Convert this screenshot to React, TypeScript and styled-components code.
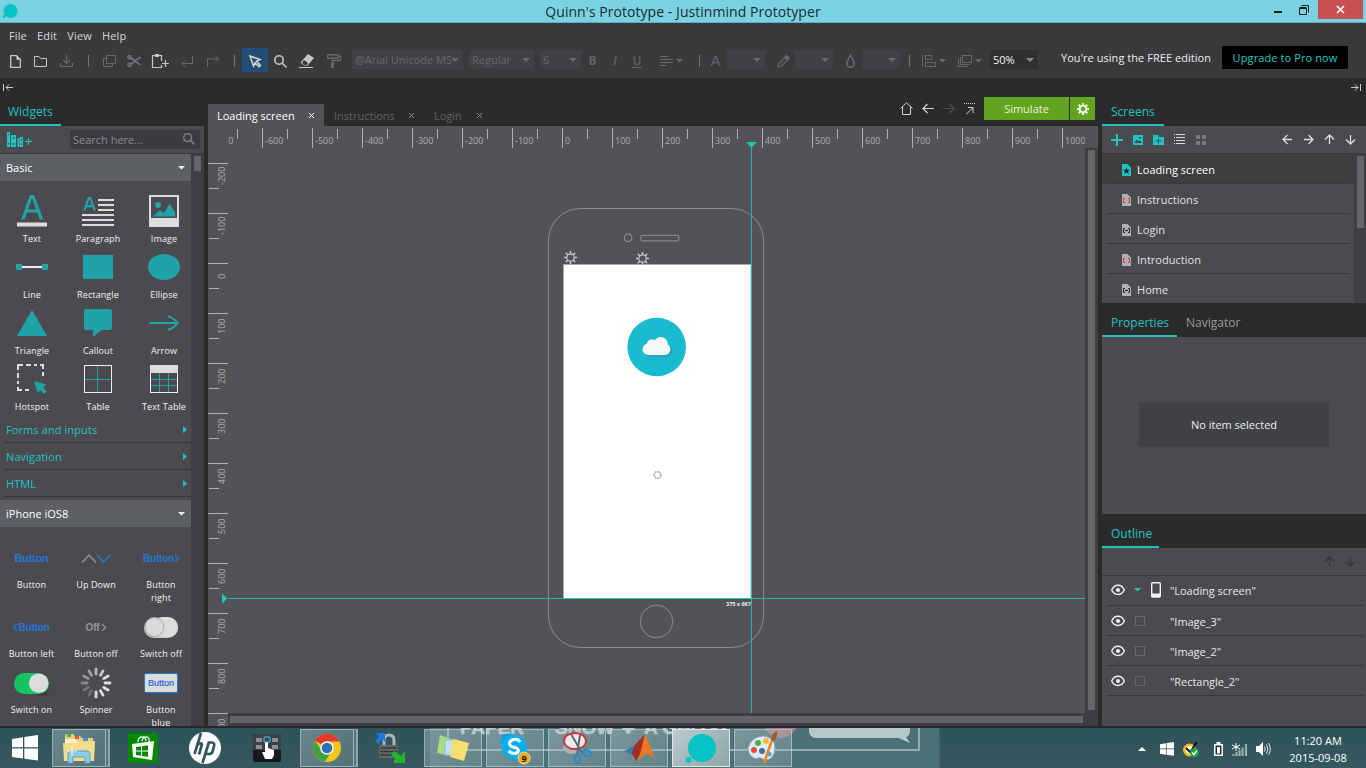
import React from "react";
import styled, { createGlobalStyle, css } from "styled-components";

const teal = "#1fc3c4";
const steel = "#1fa3a8";
const dark = "#2b2b2b";
const panel = "#4a4a4f";
const line = "#38383b";
const pale = "#dcdcdc";
const dim = "#66686c";

const Global = createGlobalStyle`
  * { box-sizing: border-box; }
  html, body { margin: 0; padding: 0; overflow: hidden; }
  body { font-family: "Open Sans", "Noto Sans", sans-serif; font-size: 11px; color: #e6e6e6; background: ${dark}; }
`;

const Desktop = styled.div`
  width: 1366px; height: 768px; display: flex; flex-direction: column; overflow: hidden; background: ${dark};
`;

const Svg = styled.svg`display: block; flex: none; overflow: visible;`;
type IconProps = { w: number; h: number; children: React.ReactNode; crisp?: boolean; stroke?: string; fill?: string; sw?: number };
const Icon = ({ w, h, children, crisp, stroke = "none", fill = "none", sw = 1 }: IconProps) => (
  <Svg width={w} height={h} viewBox={`0 0 ${w} ${h}`} stroke={stroke} fill={fill} strokeWidth={sw}
    shapeRendering={crisp ? "crispEdges" : "auto"}>{children}</Svg>
);

/* ---------- title bar ---------- */
const TitleBar = styled.header`
  height: 23px; flex: none; display: grid; grid-template-columns: 136px 1fr 136px; background: #7ad3e3;
  border-bottom: 1px solid #5fb0bf;
`;
const Title = styled.div`
  text-align: center; color: #1d2a2e; font-size: 14px; line-height: 23px; letter-spacing: 0.05px; white-space: nowrap;
`;
const WindowButtons = styled.div`display: flex; justify-content: flex-end; padding-right: 3px;`;
const WinButton = styled.div<{ $w: number; $red?: boolean }>`
  width: ${p => p.$w}px; height: 19px; display: flex; align-items: center; justify-content: center;
  background: ${p => (p.$red ? "#c75050" : "transparent")};
`;

/* ---------- menu and toolbar ---------- */
const Chrome = styled.div`height: 55px; flex: none; background: #3a3a3d; display: flex; flex-direction: column;`;
const MenuRow = styled.nav`
  height: 19px; display: flex; padding: 4px 0 0 9px; gap: 10.3px; line-height: 18px; color: #d6d6d6; font-size: 11px; letter-spacing: 0.1px;
`;
const ToolRow = styled.div`height: 36px; display: flex; align-items: center; padding-left: 4px;`;
const Tool = styled.div<{ $w: number; $active?: boolean; $shift?: number }>`
  width: ${p => p.$w}px; height: 24px; flex: none; display: flex; align-items: center; justify-content: center; gap: 3px;
  padding: 2px 0 0 ${p => p.$shift || 0}px; 
  ${p => p.$active && css`background: #264c72; border: 1px solid #17528f;`}
`;
const Divider = styled.i`width: 1px; height: 12px; background: #737578;`;
const Combo = styled.div<{ $w: number; $ml?: number; $lit?: boolean }>`
  width: ${p => p.$w}px; height: 19px; margin: 0 0 1px ${p => p.$ml || 0}px; flex: none; padding: 0 4px 0 3px;
  display: flex; align-items: center; justify-content: space-between; line-height: 19px; white-space: nowrap;
  background: ${p => (p.$lit ? "#2f3032" : "#404144")}; color: ${p => (p.$lit ? "#f0f0f0" : dim)};
`;
const ComboText = styled.span`overflow: hidden; flex: 1;`;
const Letter = styled.span<{ $kind: "b" | "i" | "u" | "a" }>`
  color: #606265; font-family: ${p => (p.$kind === "a" ? '"Liberation Sans"' : '"Open Sans"')}, sans-serif;
  font-size: ${p => (p.$kind === "a" ? 15 : 12)}px; line-height: 14px;
  font-weight: ${p => (p.$kind === "a" ? 400 : p.$kind === "b" ? 700 : 600)};
  font-style: ${p => (p.$kind === "i" ? "italic" : "normal")};
  ${p => p.$kind === "u" && css`border-bottom: 1px solid #606265; line-height: 12px; padding: 0 1px;`}
`;
const Edition = styled.span`margin: 0 0 5px 23px; color: #ececec; white-space: nowrap; letter-spacing: 0.04px;`;
const Upgrade = styled.button`
  margin: 0 18px 5px auto; width: 126px; height: 23px; border: 0; padding: 0; background: #000; color: #1fc9c3;
  font: 11px/23px "Open Sans", sans-serif; letter-spacing: 0.1px; white-space: nowrap;
`;

/* ---------- workspace ---------- */
const Workspace = styled.main`height: 648px; flex: none; display: flex; gap: 4px; background: ${dark}; overflow: hidden;`;
const Column = styled.section<{ $w: number }>`width: ${p => p.$w}px; flex: none; display: flex; flex-direction: column; overflow: hidden;`;
const Collapse = styled.div<{ $right?: boolean }>`
  height: 20px; padding: 6px ${p => (p.$right ? 5 : 4)}px 0 3px; display: flex; justify-content: ${p => (p.$right ? "flex-end" : "flex-start")};
`;
const TabHead = styled.div<{ $h: number }>`height: ${p => p.$h}px; flex: none; display: flex; align-items: flex-end; background: ${dark};`;
const PanelTab = styled.div<{ $w: number; $on?: boolean; $pl: number }>`
  width: ${p => p.$w}px; height: 27px; padding-left: ${p => p.$pl}px; line-height: 25px; font-size: 12px; white-space: nowrap;
  color: ${p => (p.$on ? teal : "#97999c")}; border-bottom: 2px solid ${p => (p.$on ? teal : "transparent")};
`;
const ScrollTrack = styled.div<{ $w: number }>`width: ${p => p.$w}px; flex: none; background: #3f3f43; padding: 2px 0 0 3px;`;
const ScrollThumb = styled.div<{ $h: number }>`width: 7px; height: ${p => p.$h}px; background: #656568;`;

/* left */
const SearchRow = styled.div`
  height: 28px; flex: none; background: ${panel}; border-bottom: 1px solid ${line}; display: flex; align-items: flex-start;
  justify-content: space-between; padding: 4px 4px 0 7px;
`;
const SearchBox = styled.div`
  width: 130px; height: 19px; background: #3c3c40; color: #8b8d90; display: flex; justify-content: space-between;
  padding: 0 5px 0 3px; line-height: 20px;
`;
const SearchLens = styled.div`padding-top: 3px;`;
const LeftBody = styled.div`flex: 1; display: flex; background: ${panel}; overflow: hidden;`;
const Palette = styled.div`width: 191px; height: 572px; overflow: hidden;`;
const SectionHead = styled.div<{ $mt?: number }>`
  height: 27px; margin-top: ${p => p.$mt || 0}px; padding: 0 6px; background: #5c5f63; color: #fff; line-height: 28px; display: flex;
  justify-content: space-between; align-items: center;
`;
const Grid = styled.div<{ $top: number; $rows: string; $cols: string; $ml?: number }>`
  display: grid; grid-template-columns: ${p => p.$cols}; grid-template-rows: ${p => p.$rows};
  padding-top: ${p => p.$top}px; margin-left: ${p => p.$ml || 0}px; width: 198px;
`;
const Widget = styled.div`display: flex; flex-direction: column; align-items: center; min-width: 0;`;
const WidgetArt = styled.div`height: 36px; flex: none; display: flex; align-items: center; justify-content: center; white-space: nowrap;`;
const WidgetName = styled.div<{ $mt: number }>`
  max-width: 49px; font-size: 9px; line-height: 13px; margin-top: ${p => p.$mt}px; text-align: center; color: #f2f2f2; letter-spacing: 0.1px;
`;
const Fold = styled.div`
  height: 27px; margin-left: 4px; padding: 0 4px 0 2px; border-bottom: 1px solid #37373a; color: ${teal};
  display: flex; align-items: center; justify-content: space-between; letter-spacing: 0.1px;
`;
const Blue = styled.span<{ $grey?: boolean; $small?: boolean }>`
  color: ${p => (p.$grey ? "#97979a" : "#2377dc")}; font: 600 ${p => (p.$small ? 10 : 11)}px "Liberation Sans", sans-serif; letter-spacing: -0.2px;
  display: flex; align-items: center; gap: ${p => (p.$grey ? 3 : 1)}px;
`;
const BlueBox = styled.span`
  width: 34px; height: 20px; background: ${pale}; border: 1px solid #2377dc; border-radius: 2px; color: #1668d8;
  font: 9px/18px "Liberation Sans", sans-serif; text-align: center; -webkit-text-stroke: 0.2px #1668d8;
`;

/* center */
const DocBar = styled.div`height: 28px; flex: none; display: flex; align-items: flex-end; padding-right: 3px;`;
const DocTab = styled.div<{ $w: number; $on?: boolean; $pl: number; $pr: number }>`
  width: ${p => p.$w}px; height: 22px; padding: 0 ${p => p.$pr}px 0 ${p => p.$pl}px; display: flex; align-items: center;
  justify-content: space-between; background: ${p => (p.$on ? "#535257" : "transparent")}; color: ${p => (p.$on ? "#fff" : "#616265")};
  padding-top: 1px; line-height: 22px; white-space: nowrap;
`;
const DocActions = styled.div`margin-left: auto; height: 35px; display: flex; align-items: center; gap: 9.5px;`;
const Simulate = styled.div`
  display: flex; gap: 1px; color: #eaf5d8; font-size: 11px; line-height: 23px; text-align: center;
`;
const SimLabel = styled.div`width: 85px; background: #62a420;`;
const SimGear = styled.div`width: 25px; background: #62a420; display: flex; align-items: center; justify-content: center;`;
const Board = styled.div`
  flex: 1; display: grid; grid-template-columns: 20px 857px 13px; grid-template-rows: 22px 565px 13px; background: #535257; overflow: hidden;
`;
const HRuler = styled.div`overflow: hidden; display: flex; padding-top: 2px;`;
const HCell = styled.div`
  width: 50px; height: 20px; flex: none; border-left: 1px solid #aeb1b4; color: #abaeb1; font-size: 9px; line-height: 26px;
  padding-left: 2px; display: flex; justify-content: space-between; white-space: nowrap;
  &:first-child { margin-left: -16px; }
  &::after { content: ""; width: 1px; height: 10px; margin: 1px 24px 0 -30px; background: #aeb1b4; }
`;
const VRuler = styled.div`overflow: hidden; padding-top: 15px; grid-row: 2 / 4;`;
const VCell = styled.div`
  height: 50px; width: 20px; border-top: 1px solid #aeb1b4; display: grid; grid-template-rows: 24px 1px 1fr; color: #abaeb1; font-size: 9px;
  &::after { content: ""; width: 10px; margin-left: 1px; background: #aeb1b4; }
`;
const VLabel = styled.span`
  writing-mode: vertical-rl; transform: rotate(180deg); line-height: 14px; justify-self: end; text-align: center; width: 14px; margin-right: -1px; height: 24px;
  display: flex; justify-content: center; white-space: nowrap;
`;
const Artboard = styled.div`position: relative; overflow: visible;`;
const Drawing = styled.svg`position: absolute; left: -20px; top: -22px; pointer-events: none;`;
const HScroll = styled.div`grid-column: 2 / 4; background: #3e3e42; padding: 3px 15px 3px 2px;`;
const HThumb = styled.div`height: 7px; background: #656567;`;
const SizeTag = styled.span`
  position: absolute; left: 498px; top: 452px; font-size: 5.5px; font-weight: 700; line-height: 8px; color: #eee; white-space: nowrap;
`;

/* right */
const ScreenTools = styled.div`
  height: 28px; flex: none; background: ${panel}; border-bottom: 1px solid ${line}; display: flex; align-items: center; padding: 0 11px 0 9px; gap: 10px;
`;
const Push = styled.span`margin-left: auto; display: flex; gap: 12px;`;
const ScreenBody = styled.div`height: 149px; flex: none; display: flex; background: ${panel}; overflow: hidden;`;
const ScreenList = styled.div`width: 252px;`;
const ScreenRow = styled.div<{ $on?: boolean }>`
  height: 30px; display: flex; align-items: center; padding-left: 20px; gap: 6px; line-height: 30px; padding-top: 1px;
  color: ${p => (p.$on ? "#fff" : "#e2e2e2")}; letter-spacing: 0.03px;
  background: linear-gradient(${line}, ${line}) 5px 29px / 243px 1px no-repeat, ${p => (p.$on ? "#3e3e41" : panel)};
`;
const Props = styled.div`
  height: 177px; flex: none; background: ${panel}; display: flex; justify-content: center; align-items: center; padding-bottom: 2px;
`;
const Empty = styled.div`width: 190px; height: 44px; background: #404144; line-height: 44px; text-align: center; color: #ececec;`;
const OutlineBody = styled.div`height: 178px; flex: none; background: ${panel};`;
const OutlineTools = styled.div`height: 28px; border-bottom: 1px solid ${line}; display: flex; align-items: center; padding-right: 11px;`;
const OutlineRow = styled.div<{ $root?: boolean }>`
  height: 30px; margin: 0 3px 0 5px; padding: 0 0 ${p => (p.$root ? 2 : 0)}px 4px; border-bottom: 1px solid ${line}; display: grid; align-items: center;
  grid-template-columns: ${p => (p.$root ? "23px 13px" : "24px 12px")} 19px 1fr; color: #e8e8e8;
`;
const OutlineText = styled.span`padding: 2px 0 0 4px; letter-spacing: -0.04px;`;

/* ---------- taskbar ---------- */
const Taskbar = styled.footer`
  height: 42px; flex: none; border-top: 2px solid #26282a; background: linear-gradient(#2d5359, #35585e); display: flex; position: relative; overflow: hidden;
`;
const Wallpaper = styled.div`position: absolute; left: 430px; top: 0; width: 936px; height: 40px; overflow: hidden; background: linear-gradient(90deg, #4b7075 0 509px, transparent 510px);`;
const WallFrame = styled.div`position: absolute; left: 17px; top: -30px; width: 473px; height: 53px; border: 2px solid #97acb0;`;
const WallText = styled.span<{ $x: number; $w: number; $size?: number }>`
  position: absolute; left: ${p => p.$x}px; width: ${p => p.$w}px; top: -14px; text-align: left;
  font: 700 ${p => p.$size || 19}px/28px "Liberation Sans", sans-serif; color: #bccacc; white-space: pre; -webkit-text-stroke: 0.6px #bccacc;
`;
const WallBubble = styled.div`position: absolute; left: 379px; top: -14px; width: 101px; height: 24px; border-radius: 7px; background: #b7c8cb;`;
const WallTail = styled.div`
  position: absolute; left: 462px; top: 7px; width: 18px; height: 8px; background: #b7c8cb; clip-path: polygon(0 0, 70% 0, 100% 100%);
`;
const WallDisc = styled.div`position: absolute; left: 333px; top: -28px; width: 35px; height: 38px; border-radius: 50%; background: #a77f85;`;
const Apps = styled.div`position: relative; display: flex; align-items: flex-start; padding-top: 1px;`;
const AppTile = styled.div<{ $w: number; $ml?: number; $run?: boolean; $on?: boolean; $stack?: boolean }>`
  width: ${p => p.$w}px; height: 38px; margin-left: ${p => p.$ml || 0}px; flex: none; display: flex; align-items: center; justify-content: center;
  ${p => p.$run && css`background: linear-gradient(135deg, rgba(190,205,208,.42), rgba(150,175,178,.3)); border: 1px solid rgba(210,222,224,.55);`}
  ${p => p.$on && css`background: linear-gradient(135deg, #bccacc, #8ba6aa); border-color: #dfe8ea;`}
  ${p => p.$stack && css`box-shadow: 3px 0 0 -1px #52767b, 4px 0 0 0 #8fa6a9; margin-right: 4px;`}
`;
const Tray = styled.div`position: relative; margin-left: auto; display: flex; align-items: center; padding: 2px 18px 0 0;`;
const TrayItem = styled.div<{ $w: number }>`width: ${p => p.$w}px; display: flex; justify-content: center;`;
const Clock = styled.div`width: 60px; margin: 0 0 1px 10px; text-align: center; color: #fff; line-height: 17px; font-size: 11px; white-space: nowrap;`;

/* ---------- glyphs ---------- */
const Down = ({ c = "#808386", w = 8 }: { c?: string; w?: number }) => (
  <Icon w={w} h={w / 2} fill={c}><path d={`M0 0H${w}L${w / 2} ${w / 2}Z`} /></Icon>
);
const Arrow = ({ dir, c = "#dedede", s = 1.3 }: { dir: number; c?: string; s?: number }) => (
  <Icon w={9} h={9} stroke={c} sw={s}><path transform={`rotate(${dir} 4.5 4.5)`} d="M0 4.500H9M4.500 0L0 4.500L4.500 9" /></Icon>
);
const Chevron = ({ left, c = "#2377dc" }: { left?: boolean; c?: string }) => (
  <Icon w={4} h={7} stroke={c} sw={1.200}><path d={left ? "M4 0L.5 3.500L4 7" : "M0 0L3.500 3.500L0 7"} /></Icon>
);
const Close = ({ c }: { c: string }) => <Icon w={5} h={5} stroke={c} sw={1}><path d="M0 0L5 5M5 0L0 5" /></Icon>;
const Lens = ({ c, s = 13 }: { c: string; s?: number }) => (
  <Svg width={s} height={s} viewBox="0 0 13 13" fill="none" stroke={c} strokeWidth="1.6"><circle cx="5" cy="5" r="4.2" /><path d="M8 8L12.500 12.500" /></Svg>
);
const spokes = (n: number, cx: number, cy: number, a: number, b: number) =>
  Array.from({ length: n }, (_, i) => {
    const t = (i / n) * Math.PI * 2;
    return `M${cx + a * Math.sin(t)} ${cy - a * Math.cos(t)}L${cx + b * Math.sin(t)} ${cy - b * Math.cos(t)}`;
  });
const Eye = () => (
  <Icon w={14} h={12} stroke="#f0f0f0" sw={1.4}><path d="M.7 6C3.4 -.3 10.6 -.3 13.3 6C10.6 12 3.4 12 .7 6Z" /><circle cx="7" cy="6" r="2" fill="#f0f0f0" stroke="none" /></Icon>
);
const PageIcon = ({ kind }: { kind: "star" | "red" | "black" }) => (
  <Icon w={9} h={12}>
    <path d="M0 0H5.5L9 3.5V12H0Z" fill={kind === "star" ? teal : "#aab2b2"} />
    {kind === "star" ? <path d="M4.5 3.4L5.4 5.7H8L6 7.3L6.8 9.9L4.5 8.4L2.2 9.9L3 7.3L1 5.7H3.6Z" fill="#222" /> :
      <path d="M3 4.500H1.500V8.500H3M6 4.500H7.500V8.500H6" stroke={kind === "red" ? "#e0283c" : "#222"} />}
    {kind === "black" && <path d="M3 6.500H6" stroke="#222" />}
  </Icon>
);

const basic: [string, React.ReactNode][] = [
  ["Text", <Icon w={30} h={32}><path d="M4 24.500L13 0H17L26.500 24.500H22.600L20.200 17.500H9.900L7.600 24.500ZM11 14.500H19.100L15 3Z" fill={steel} fillRule="evenodd" /><path d="M0 27.500H30V31.500H0Z" fill={pale} /></Icon>],
  ["Paragraph", <Icon w={32} h={30}><path d="M1 14.500L6 1H9L14 14.500H11.600L10.400 11.200H4.600L3.400 14.500ZM5.400 9H9.600L7.500 3Z" fill={steel} fillRule="evenodd" /><path d="M16 4H32M16 9H32M16 14H32M0 19H32M0 24H32M0 29H32" stroke={pale} strokeWidth="2" /></Icon>],
  ["Image", <Icon w={30} h={32}><path d="M0 0H30V32H0ZM2 2V23H28V2Z" fill={pale} fillRule="evenodd" /><circle cx="9" cy="10" r="3" fill={steel} /><path d="M4 21.500L11 15L15 18L20.500 9L26 17V21.500Z" fill={steel} /></Icon>],
  ["Line", <Icon w={32} h={6}><path d="M5 3H27" stroke="#eee" strokeWidth="2" /><path d="M0 0H6V6H0ZM26 0H32V6H26Z" fill={steel} /></Icon>],
  ["Rectangle", <Icon w={30} h={24}><path d="M0 0H30V24H0Z" fill={steel} /></Icon>],
  ["Ellipse", <Icon w={32} h={26}><ellipse cx="16" cy="13" rx="16" ry="13" fill={steel} /></Icon>],
  ["Triangle", <Icon w={30} h={26}><path d="M15 0L30 26H0Z" fill={steel} /></Icon>],
  ["Callout", <Icon w={28} h={28}><path d="M2 0H26Q28 0 28 2V19Q28 21 26 21H17.500L9 28V21H2Q0 21 0 19V2Q0 0 2 0Z" fill={steel} /></Icon>],
  ["Arrow", <Icon w={30} h={14} stroke={steel} sw={2}><path d="M0 7H29M19 .5Q22 0 29 7Q22 14 19 13.500" /></Icon>],
  ["Hotspot", <Icon w={30} h={30}><path d="M1 6V1H6M9 1H14M17 1H20M23 1H26V5M26 8V12M1 9V14M1 17V20M1 23V26H5M8 26H12" stroke={pale} strokeWidth="2" /><path d="M17 17L29.500 20.500L26 23.500L30 27.500L27 30L23.500 26L20.500 29Z" fill={steel} /></Icon>],
  ["Table", <Icon w={28} h={28} crisp><path d="M13.500 1V27M1 14.500H27" stroke={steel} /><path d="M.5 .5H27.500V27.500H.5Z" stroke="#eee" /></Icon>],
  ["Text Table", <Icon w={28} h={28} crisp><path d="M9.500 8V27M18.500 8V27M1 14.500H27M1 20.500H27" stroke={steel} /><path d="M.5 .5H27.500V27.500H.5Z" stroke="#eee" /><path d="M0 0H28V8H0Z" fill={pale} /></Icon>],
];

const ios: [string, React.ReactNode][] = [
  ["Button", <Blue>Button</Blue>],
  ["Up Down", <Icon w={28} h={9} sw={1.500}><path d="M0 8.500L7 1L14 8.500" stroke="#909093" /><path d="M15 1L21.500 8L28 1" stroke="#2f79d2" /></Icon>],
  ["Button right", <Blue $small>Button<Chevron /></Blue>],
  ["Button left", <Blue $small><Chevron left />Button</Blue>],
  ["Button off", <Blue $grey $small>Off<Chevron c="#97979a" /></Blue>],
  ["Switch off", <Icon w={34} h={21}><rect x="0" y="1" width="34" height="20" rx="10" fill="#c8c9ca" /><rect x="8" y="0" width="26" height="20" rx="10" fill={pale} /><circle cx="10.500" cy="10" r="9.500" fill="#d9dadb" stroke="#a9aaac" /></Icon>],
  ["Switch on", <Icon w={35} h={21}><ellipse cx="28" cy="20" rx="7" ry="3" fill="#3c3f42" /><rect width="35" height="21" rx="10.500" fill="#16c160" /><circle cx="24.700" cy="10.200" r="9.800" fill={pale} /></Icon>],
  ["Spinner", <Icon w={30} h={30} sw={2.800}>{spokes(12, 15, 15, 9, 14).map((d, i) => <path key={i} d={d} strokeLinecap="round" stroke={`rgba(222,222,222,${[.75, .85, .95, 1, 1, 1, 1, .25, .3, .4, .5, .6][i]})`} />)}</Icon>],
  ["Button blue", <BlueBox>Button</BlueBox>],
];

const screens: [string, "star" | "red" | "black"][] = [["Loading screen", "star"], ["Instructions", "red"], ["Login", "black"], ["Introduction", "red"], ["Home", "black"]];

const grey = "#66686b";
const bright = "#c3c7c7";

const Toolbar = () => (
  <ToolRow>
    <Tool $w={23}><Icon w={11} h={13} stroke={bright} sw={1.300}><path d="M.7 .7H6.500L10.300 4.500V12.300H.7Z" /><path d="M6.500 .5V4.700H10.500Z" fill={bright} stroke="none" /></Icon></Tool>
    <Tool $w={26}><Icon w={13} h={11} stroke={bright}><path d="M.5 .5H5L6.500 2.500H12.500V10.500H.5Z" /></Icon></Tool>
    <Tool $w={26}><Icon w={13} h={12} stroke={grey} sw={1.200}><path d="M.5 8V11.500H12.500V8M6.500 0V8.500M3 5L6.500 8.500L10 5" /></Icon></Tool>
    <Tool $w={18}><Divider /></Tool>
    <Tool $w={24}><Icon w={13} h={12} stroke={grey}><path d="M3.500 .5H12.500V8.500H3.500ZM3.500 3.500H.5V11.500H9.500V8.500" /></Icon></Tool>
    <Tool $w={26}><Icon w={14} h={12} stroke="#707275" sw={1.600}><circle cx="2.500" cy="2.200" r="1.600" /><circle cx="2.500" cy="9.800" r="1.600" /><path d="M4 3L13.500 10M4 9L13.500 2" /></Icon></Tool>
    <Tool $w={27}><Icon w={17} h={14} stroke={bright} sw={1.200}><path d="M9.500 7V1.500H.5V13.500H9.500V11M13.500 6V13M10 9.500H17" /><path d="M3 0H7V3H3Z" fill={bright} stroke="none" /></Icon></Tool>
    <Tool $w={25}><Icon w={12} h={11} stroke={grey}><path d="M11.500 0V7.500H1M4.500 4L1 7.500L4.500 11" /></Icon></Tool>
    <Tool $w={28}><Icon w={12} h={12} stroke={grey}><path d="M.5 12V4H11.500M8 .5L11.500 4L8 7.500" /></Icon></Tool>
    <Tool $w={15}><Divider /></Tool>
    <Tool $w={26} $active><Icon w={12} h={12} stroke="#d4d9dc" sw={1.500}><path d="M1 1L11 4.500L7.500 6.200L11.500 10.500L10 11.800L6 7.800L4.500 11Z" /></Icon></Tool>
    <Tool $w={25}><Lens c={bright} /></Tool>
    <Tool $w={27}><Icon w={15} h={14}><path d="M0 13.500H14" stroke={bright} /><path d="M9 0L15 4L8.500 11.500H5L1.500 8.500Z" fill={bright} /><path d="M5 6L9 9L7.500 11H5L3 8.800Z" fill="#3a3a3d" /></Icon></Tool>
    <Tool $w={27}><Icon w={14} h={14} stroke={grey} sw={1.400}><path d="M.7 .7H11V4.300H.7ZM11 2H13.500V6.500H5.500V9" /><path d="M4 9H7V14H4Z" fill={grey} stroke="none" /></Icon></Tool>
    <Combo $w={111} $ml={5}><ComboText>@Arial Unicode MS</ComboText><Down c={grey} /></Combo>
    <Combo $w={65} $ml={6}><ComboText>Regular</ComboText><Down c={grey} /></Combo>
    <Combo $w={41} $ml={6}><ComboText>6</ComboText><Down c={grey} /></Combo>
    <Tool $w={23}><Letter $kind="b">B</Letter></Tool>
    <Tool $w={22}><Letter $kind="i">I</Letter></Tool>
    <Tool $w={22}><Letter $kind="u">U</Letter></Tool>
    <Tool $w={47}><Icon w={13} h={10} stroke={grey} crisp><path d="M0 .5H8M0 3.500H13M0 6.500H13M0 9.500H6" /></Icon><Down c={grey} w={7} /></Tool>
    <Tool $w={9}><Divider /></Tool>
    <Tool $w={23}><Letter $kind="a">A</Letter></Tool>
    <Combo $w={38}><ComboText /><Down c={grey} /></Combo>
    <Tool $w={30} $shift={6}><Icon w={12} h={13} stroke={grey} sw={1.200}><path d="M1 12L1.500 9L8 2.500L10.500 5L4 11.500Z" /><path d="M7.500 2L9.500 .5L12 3L10.500 5Z" fill={grey} /></Icon></Tool>
    <Combo $w={38}><ComboText /><Down c={grey} /></Combo>
    <Tool $w={29} $shift={5}><Icon w={9} h={14} stroke={grey} sw={1.500}><path d="M4.500 1C3 4.500 .8 6.500 .8 9.500A3.700 3.700 0 0 0 8.200 9.500C8.200 6.500 6 4.500 4.500 1Z" /></Icon></Tool>
    <Combo $w={38}><ComboText /><Down c={grey} /></Combo>
    <Tool $w={18}><Divider /></Tool>
    <Tool $w={32}><Icon w={14} h={12} stroke={grey} crisp><path d="M.5 0V12M3.500 .5H9.500V4.500H3.500ZM3.500 7.500H13.500V11.500H3.500Z" /></Icon><Down c={grey} w={7} /></Tool>
    <Tool $w={40}><Icon w={14} h={12} stroke={grey} crisp><path d="M4.500 .5H13.500V7.500H4.500ZM2.500 2V9.500H12M.5 4V11.500H10" /></Icon><Down c={grey} w={7} /></Tool>
    <Combo $w={48} $lit><ComboText>50%</ComboText><Down c="#8b8d90" /></Combo>
    <Edition>You're using the FREE edition</Edition>
    <Upgrade>Upgrade to Pro now</Upgrade>
  </ToolRow>
);

const Gear = ({ x, y }: { x: number; y: number }) => (
  <g stroke="#c9c9cc" fill="none"><circle cx={x} cy={y} r="3.700" strokeWidth="1.200" /><path d={spokes(8, x, y, 4, 6.500).join("")} strokeWidth="1.500" /></g>
);

const Cloud = ({ fill, d = 0 }: { fill: string; d?: number }) => (
  <g fill={fill} transform={`translate(${d} ${d})`}>
    <circle cx="648.500" cy="349.200" r="5.900" /><circle cx="652" cy="344.500" r="5.200" /><circle cx="660.700" cy="344.300" r="7.200" />
    <circle cx="664.600" cy="349.300" r="5.800" /><path d="M648.500 344H665V355.100H648.500Z" />
  </g>
);

const Canvas = () => (
  <Board>
    <span />
    <HRuler>
      {Array.from({ length: 18 }, (_, i) => <HCell key={i}>{(i - 7) * 100}</HCell>)}
    </HRuler>
    <span />
    <VRuler>{Array.from({ length: 12 }, (_, i) => <VCell key={i}><VLabel>{(i - 2) * 100}</VLabel></VCell>)}</VRuler>
    <Artboard>
      <Drawing width="890" height="587" viewBox="208 126 890 587" fill="none">
        <rect x="548.500" y="208.500" width="215" height="439" rx="32" stroke="#8c8c90" />
        <circle cx="628.200" cy="237.800" r="3.900" stroke="#939397" />
        <rect x="640.800" y="235.300" width="38" height="5.600" rx="1.500" stroke="#939397" />
        <circle cx="656.500" cy="621.500" r="16.300" stroke="#8c8c90" />
        <rect x="563.500" y="264.500" width="187.500" height="334" fill="#fff" stroke="#a7a7a9" />
        <circle cx="656.700" cy="347" r="29.300" fill="#18bbd0" />
        <Cloud fill="#149fb5" d={1.500} />
        <Cloud fill="#f8f8f8" />
        <circle cx="657.500" cy="475" r="3.300" stroke="#9ea5aa" strokeWidth="1.800" strokeDasharray="1.300 .8" />
        <Gear x={570.500} y={257.500} /><Gear x={642.500} y={258.500} />
        <path d="M228 598.500H1085M751.500 142V713" stroke={teal} strokeWidth="1" opacity=".85" />
        <path d="M222 593.500V603.500L227.500 598.500ZM746 142H757L751.500 147.500Z" fill={teal} />
      </Drawing>
      <SizeTag>375 x 667</SizeTag>
    </Artboard>
    <ScrollTrack $w={13}><ScrollThumb $h={560} /></ScrollTrack>
    <HScroll><HThumb /></HScroll>
  </Board>
);

const WinLogo = ({ s }: { s: number }) => (
  <Svg width={s} height={s} viewBox="0 0 26 26" fill="#fff"><path d="M0 4L11 2.300V12.300H0ZM12.300 2L26 0V12.300H12.300ZM0 13.500H11V23.500L0 22ZM12.300 13.500H26V25.500L12.300 23.700Z" /></Svg>
);

const Task = () => (
  <Taskbar>
    <Wallpaper>
      <WallFrame />
      <WallText $x={30} $w={70}>PAPER</WallText><WallText $x={125} $w={70}>SNOW</WallText><WallText $x={192} $w={20} $size={15}>✤</WallText>
      <WallText $x={214} $w={100}>A GHOST</WallText><WallDisc /><WallBubble /><WallTail />
    </Wallpaper>
    <Apps>
      <AppTile $w={50}><WinLogo s={26} /></AppTile>
      <AppTile $w={54} $ml={2} $run $stack>
        <Icon w={32} h={30}><path d="M2 3Q2 1 4 1H10L12 3H17L19 5H30V13H2Z" fill="#e9cf76" /><path d="M4 1H8V4H4Z" fill="#3bb54a" /><path d="M12 3H16V6H12Z" fill="#d55" /><path d="M20 5H25V8H20Z" fill="#3b9ad8" /><path d="M2 6H12L14 8H30V13H2Z" fill="#fff3ca" /><path d="M0 10H13L15 8H32L31 28H1Z" fill="#f3dc8a" /><path d="M5 30V21Q5 18 8 18H24Q27 18 27 21V30H22V24H10V30Z" fill="#8fcbe8" stroke="#4f9fca" /><path d="M9 13V23M4 18H14" stroke="#fff" opacity=".8" /></Icon>
      </AppTile>
      <AppTile $w={30} $ml={18}>
        <Icon w={30} h={30}><path d="M0 0H30V30H0Z" fill="#018a01" /><path d="M10 9Q10 4 14 4Q18 4 18 8M14 8Q15 3 19 4Q22 5 21 10" stroke="#e8f4e8" strokeWidth="1.300" /><path d="M4 11L26 8L24 27L5 24Z" fill="#fff" /><path d="M8 14L13 13.300V17.500H8ZM14 13.200L20 12.300V17.500H14ZM8 18.500H13V22.700L8 22ZM14 18.500H20V23.700L14 22.900Z" fill="#018a01" /></Icon>
      </AppTile>
      <AppTile $w={32} $ml={31}>
        <Icon w={32} h={32}><circle cx="16" cy="16" r="16" fill="#fff" /><path d="M12 1L5.500 22M8 13Q14 9 12.500 14L10 22.500M20 10L13.500 31M19 10.500H23Q26 10.500 25 14.500L23.500 19.500Q22.800 22 20 22H17" stroke="#33565c" strokeWidth="2.700" /></Icon>
      </AppTile>
      <AppTile $w={28} $ml={32}>
        <Icon w={28} h={28}><rect width="28" height="28" rx="2" fill="#18191c" /><path d="M0 2Q0 0 2 0H26Q28 0 28 2V16H0Z" fill="#3c4046" /><path d="M3 4H9V8H3ZM19 4H25V8H19ZM3 11H9V15H3ZM19 11H25V15H19Z" fill="#8b8f94" /><path d="M11 3H17V8H11Z" fill="#394b55" stroke="#43c3f0" /><path d="M12 25L9 18L12 18V9Q14 7 15 9V14L21 16V21L19 25Z" fill="#fff" /></Icon>
      </AppTile>
      <AppTile $w={54} $ml={19} $run $stack>
        <Icon w={28} h={28}><circle cx="14" cy="14" r="14" fill="#f4c51d" /><path d="M14 14L2 6.500A14 14 0 0 1 26.500 7.500H14Z" fill="#df3a2f" /><path d="M2 6.500A14 14 0 0 0 12 27.800L18 18L9 17Z" fill="#43a047" /><circle cx="14" cy="14" r="6.800" fill="#f7f7f7" /><circle cx="14" cy="14" r="5.300" fill="#2f6fb8" /></Icon>
      </AppTile>
      <AppTile $w={32} $ml={17}>
        <Icon w={32} h={32}><path d="M9 14V8Q9 3 14 3Q19 3 19 8V14" stroke="#aeb3b6" strokeWidth="3" /><rect x="4" y="13" width="19" height="13" rx="2" fill="#63686b" /><path d="M5 16H22M5 19.500H22M5 23H22" stroke="#34383a" strokeWidth="1.500" /><path d="M1 1H10V10L7.500 7.500L3.500 12L0 9L4 4.500Z" fill="#1d76e2" /><path d="M30 31H19V27.500L21 28L16 22L19 19L26 24L30 19Z" fill="#22b52c" /></Icon>
      </AppTile>
      <AppTile $w={58} $ml={17} $run>
        <Icon w={32} h={26}><path d="M3 0L17 5L12 21L0 18Z" fill="#a5dd80" /><path d="M8 5H21V20H8Z" fill="#c5def3" stroke="#8db6da" /><path d="M16 4L32 8L27 26L13 22Z" fill="#f6df70" /></Icon>
      </AppTile>
      <AppTile $w={58} $ml={4} $run>
        <Icon w={30} h={30}><circle cx="8" cy="8" r="7.500" fill="#04a4e4" /><circle cx="20" cy="21" r="8" fill="#04a4e4" /><circle cx="14" cy="14" r="12.500" fill="#04aff0" /><path d="M20 9Q18 5.500 13.500 6.500Q9 8 9.500 11Q10 13.500 15 14.500Q19.500 16 18 19Q14 22.500 8.500 18" stroke="#fff" strokeWidth="3" /><circle cx="24" cy="25" r="6" fill="#f5a81c" stroke="#fff3c0" strokeWidth=".7" /><text x="24" y="28.500" textAnchor="middle" fill="#111" fontSize="9" fontWeight="700" fontFamily="Open Sans">9</text></Icon>
      </AppTile>
      <AppTile $w={58} $ml={4} $run>
        <Icon w={30} h={32}><ellipse cx="10" cy="16" rx="9" ry="6" fill="#a9b0b4" /><ellipse cx="13" cy="9" rx="11" ry="8" fill="#f0e9ea" stroke="#d12e38" strokeWidth="1.800" /><path d="M9 2L20 21M18 3L15 23" stroke="#596a74" strokeWidth="2" /><ellipse cx="15.500" cy="27" rx="2.600" ry="4" stroke="#258bcd" strokeWidth="2" /><ellipse cx="25" cy="21" rx="4.500" ry="2.800" stroke="#258bcd" strokeWidth="2" transform="rotate(25 25 21)" /></Icon>
      </AppTile>
      <AppTile $w={58} $ml={4} $run>
        <Icon w={31} h={28}><path d="M0 17L10 12L15 18L10 22Z" fill="#3a77ad" /><path d="M10 12L21 0L17 18L12 27L8 19Z" fill="#9e2f22" /><path d="M21 0Q25 9 31 25Q26 20 22 20Q18 22 14 28Q17 16 21 0Z" fill="#ee7621" /></Icon>
      </AppTile>
      <AppTile $w={58} $ml={4} $run $on>
        <Icon w={32} h={30}><circle cx="17" cy="15" r="14" fill="#07c3c5" /><circle cx="3.500" cy="27" r="3" fill="#07c3c5" /></Icon>
      </AppTile>
      <AppTile $w={58} $ml={4} $run>
        <Icon w={32} h={32}><path d="M16 4Q28 5 28 16Q27 29 17 28Q13 24 9 27Q1 24 1 16Q4 5 16 4Z" fill="#dfeaf4" stroke="#8da8bf" /><circle cx="11" cy="11" r="3" fill="#48b149" /><circle cx="19" cy="9" r="3" fill="#f2bd31" /><circle cx="7" cy="18" r="3" fill="#e24a3d" /><circle cx="15" cy="19" r="3" fill="#466f96" /><circle cx="22" cy="22" r="2.500" fill="#49a7dd" /><path d="M17 31L25 8" stroke="#e28a25" strokeWidth="2.500" /><path d="M24 8Q24 2 30 -1Q31 5 27 9Z" fill="#9d5c2f" /></Icon>
      </AppTile>
    </Apps>
    <Tray>
      <TrayItem $w={24}><Icon w={8} h={4} fill="#fff"><path d="M0 4H8L4 0Z" /></Icon></TrayItem>
      <TrayItem $w={25}><WinLogo s={14} /></TrayItem>
      <TrayItem $w={24}><Icon w={16} h={15}><circle cx="6.500" cy="8" r="5.200" fill="#fff" stroke="#fabf17" strokeWidth="2.600" /><path d="M3 6L7 10L14 0" stroke="#111" strokeWidth="1.800" /><circle cx="11.500" cy="10.500" r="4.500" fill="#20a14a" /><path d="M9 10.500L11 12.500L14 8.500" stroke="#fff" strokeWidth="1.500" /></Icon></TrayItem>
      <TrayItem $w={30}><Icon w={9} h={14}><path d="M0 2H2.500V0H6.500V2H9V14H0Z" fill="#fff" /><path d="M1.500 3.500H7.500V12.500H1.500Z" fill="#1b2b30" /><path d="M3 5H6V11.500H3Z" fill="#fff" /></Icon></TrayItem>
      <TrayItem $w={14}><Icon w={16} h={13}><path d="M1.500 13V11M4.500 13V9M7.500 13V7M10.500 13V4.500M14 13V1" stroke="#9cacaf" strokeWidth="2.200" /><path d="M4 0V8M0 2L8 6M8 2L0 6" stroke="#fff" /></Icon></TrayItem>
      <TrayItem $w={31}><Icon w={14} h={14}><path d="M0 4H3L7 0V14L3 10H0Z" fill="#fff" /><path d="M8.500 4.500Q10 7 8.500 9.500M10.500 2.500Q13 7 10.500 11.500M12.500 1Q16 7 12.500 13" stroke="#dfe7e8" /></Icon></TrayItem>
      <Clock>11:20 AM<br />2015-09-08</Clock>
    </Tray>
  </Taskbar>
);

export default function App() {
  return (
    <Desktop>
      <Global />
      <TitleBar>
        <Icon w={19} h={19}><circle cx="10.500" cy="11" r="7" fill="#07c3c5" /><circle cx="4" cy="16.500" r="1.500" fill="#07c3c5" /></Icon>
        <Title>Quinn's Prototype - Justinmind Prototyper</Title>
        <WindowButtons>
          <WinButton $w={26}><Icon w={8} h={8}><path d="M0 5H8V7H0Z" fill="#1b1b1b" /></Icon></WinButton>
          <WinButton $w={27}><Icon w={10} h={10} stroke="#1b1b1b"><path d="M-.5 3.500H6.500V9.500H-.5ZM-.5 2.500H6.500M1.500 .5H8.500V7.500" /></Icon></WinButton>
          <WinButton $w={45} $red><Icon w={7} h={7} stroke="#fff" sw={1.700}><path d="M0 0L7 7M7 0L0 7" /></Icon></WinButton>
        </WindowButtons>
      </TitleBar>
      <Chrome>
        <MenuRow><span>File</span><span>Edit</span><span>View</span><span>Help</span></MenuRow>
        <Toolbar />
      </Chrome>
      <Workspace>
        <Column $w={204}>
          <Collapse><Icon w={10} h={7} stroke="#c9cdd0"><path d="M.5 0V7M3 3.500H10M6 .5L3 3.500L6 6.500" /></Icon></Collapse>
          <TabHead $h={28}><PanelTab $w={61} $pl={8} $on>Widgets</PanelTab></TabHead>
          <SearchRow>
            <Icon w={26} h={19} stroke={teal} sw={1.200}><path d="M0 2H3V17H0ZM4 5H9V17H4ZM10.500 8H12.500V17H10.500ZM13 7H16V17H13Z" fill={teal} stroke="none" /><path d="M1.500 4V5M1.500 13V14.500M5.500 8H8M5.500 14H8M14.500 9V10.500M14.500 13.500V15" stroke={panel} /><path d="M21.500 8V15M18 11.500H25" /></Icon>
            <SearchBox><span>Search here...</span><SearchLens><Lens c="#7c7e81" s={12} /></SearchLens></SearchBox>
          </SearchRow>
          <LeftBody>
            <Palette>
              <SectionHead>Basic<Down c="#f2f2f2" w={7} /></SectionHead>
              <Grid $top={12} $rows="56px 56px 56px 55px" $cols="repeat(3, 66px)" $ml={-1}>
                {basic.map(([n, art]) => <Widget key={n}><WidgetArt>{art}</WidgetArt><WidgetName $mt={3}>{n}</WidgetName></Widget>)}
              </Grid>
              {["Forms and inputs", "Navigation", "HTML"].map(n => (
                <Fold key={n}>{n}<Icon w={4} h={7} fill={teal}><path d="M0 0L4 3.500L0 7Z" /></Icon></Fold>
              ))}
              <SectionHead $mt={3}>iPhone iOS8<Down c="#f2f2f2" w={7} /></SectionHead>
              <Grid $top={13} $rows="69px 56px 60px" $cols="63px 66px 64px">
                {ios.map(([n, art]) => <Widget key={n}><WidgetArt>{art}</WidgetArt><WidgetName $mt={2}>{n}</WidgetName></Widget>)}
              </Grid>
            </Palette>
            <ScrollTrack $w={13}><ScrollThumb $h={15} /></ScrollTrack>
          </LeftBody>
        </Column>
        <Column $w={890}>
          <Collapse />
          <DocBar>
            <DocTab $w={116} $on $pl={9} $pr={10}>Loading screen<Close c="#fff" /></DocTab>
            <DocTab $w={100} $pl={10} $pr={10}>Instructions<Close c="#8b8d8f" /></DocTab>
            <DocTab $w={68} $pl={10} $pr={10}>Login<Close c="#8b8d8f" /></DocTab>
            <DocActions>
              <Icon w={13} h={13} stroke="#d0d4d4"><path d="M.5 6.500L6.500 .8L12.500 6.500M2.500 5V12.500H10.500V5" /></Icon>
              <Icon w={11} h={9} stroke="#d0d4d4" sw={1.200}><path d="M0 4.500H11M4.500 0L0 4.500L4.500 9" /></Icon>
              <Icon w={11} h={9} stroke="#4b4d50" sw={1.200}><path d="M0 4.500H11M6.500 0L11 4.500L6.500 9" /></Icon>
              <Icon w={11} h={12} stroke="#d0d4d4"><path d="M0 .5H11" strokeDasharray="1 1" /><path d="M2.500 11L8.500 5M4 4.500H9V10" /></Icon>
              <Simulate><SimLabel>Simulate</SimLabel><SimGear><Icon w={12} h={12} stroke="#f0f7e4" sw={2}><circle cx="6" cy="6" r="3.300" /><path d={spokes(8, 6, 6, 4, 6).join("")} /></Icon></SimGear></Simulate>
            </DocActions>
          </DocBar>
          <Canvas />
        </Column>
        <Column $w={264}>
          <Collapse $right><Icon w={10} h={7} stroke="#c9cdd0"><path d="M9.500 0V7M0 3.500H7M4 .5L7 3.500L4 6.500" /></Icon></Collapse>
          <TabHead $h={28}><PanelTab $w={62} $pl={9} $on>Screens</PanelTab></TabHead>
          <ScreenTools>
            <Icon w={12} h={12} stroke={teal} sw={2}><path d="M6 0V12M0 6H12" /></Icon>
            <Icon w={10} h={10}><path d="M0 0H10V10H0Z" fill={teal} /><path d="M1 8L3.500 4.500L5.500 6.500L7 5L9 8ZM6 2H8V3.500H6Z" fill={panel} /></Icon>
            <Icon w={11} h={10}><path d="M0 0H5L6 2H11V10H0Z" fill={teal} /><path d="M5.500 3.500V8.500M3 6H8" stroke={panel} /></Icon>
            <Icon w={11} h={11} stroke="#d9d9d9" crisp><path d="M0 .5H1M2 .5H11M0 3.500H1M2 3.500H11M0 6.500H1M2 6.500H11M0 9.500H1M2 9.500H11" /></Icon>
            <Icon w={11} h={10} fill="#797c7f"><path d="M1 0H5V4H1ZM7 0H11V4H7ZM1 6H5V10H1ZM7 6H11V10H7Z" /></Icon>
            <Push><Arrow dir={0} /><Arrow dir={180} /><Arrow dir={90} /><Arrow dir={270} /></Push>
          </ScreenTools>
          <ScreenBody>
            <ScreenList>{screens.map(([n, k]) => <ScreenRow key={n} $on={k === "star"}><PageIcon kind={k} />{n}</ScreenRow>)}</ScreenList>
            <ScrollTrack $w={12}><ScrollThumb $h={72} /></ScrollTrack>
          </ScreenBody>
          <TabHead $h={34}><PanelTab $w={75} $pl={9} $on>Properties</PanelTab><PanelTab $w={80} $pl={9}>Navigator</PanelTab></TabHead>
          <Props><Empty>No item selected</Empty></Props>
          <TabHead $h={34}><PanelTab $w={57} $pl={9} $on>Outline</PanelTab></TabHead>
          <OutlineBody>
            <OutlineTools><Push><Arrow dir={90} c="#37373a" /><Arrow dir={270} c="#37373a" /></Push></OutlineTools>
            <OutlineRow $root><Eye /><Down c={teal} w={7} /><Icon w={19} h={16}><rect x="4.700" y=".7" width="8.600" height="14.300" rx="1" stroke="#f0f0f0" strokeWidth="1.400" /><path d="M5 11.500H13V15H5Z" fill="#f0f0f0" /></Icon><OutlineText>"Loading screen"</OutlineText></OutlineRow>
            {["Image_3", "Image_2", "Rectangle_2"].map(n => (
              <OutlineRow key={n}><Eye /><Icon w={10} h={10} stroke="#636569" crisp><path d="M.5 .5H9.500V9.500H.5Z" /></Icon><span /><OutlineText>"{n}"</OutlineText></OutlineRow>
            ))}
          </OutlineBody>
        </Column>
      </Workspace>
      <Task />
    </Desktop>
  );
}
